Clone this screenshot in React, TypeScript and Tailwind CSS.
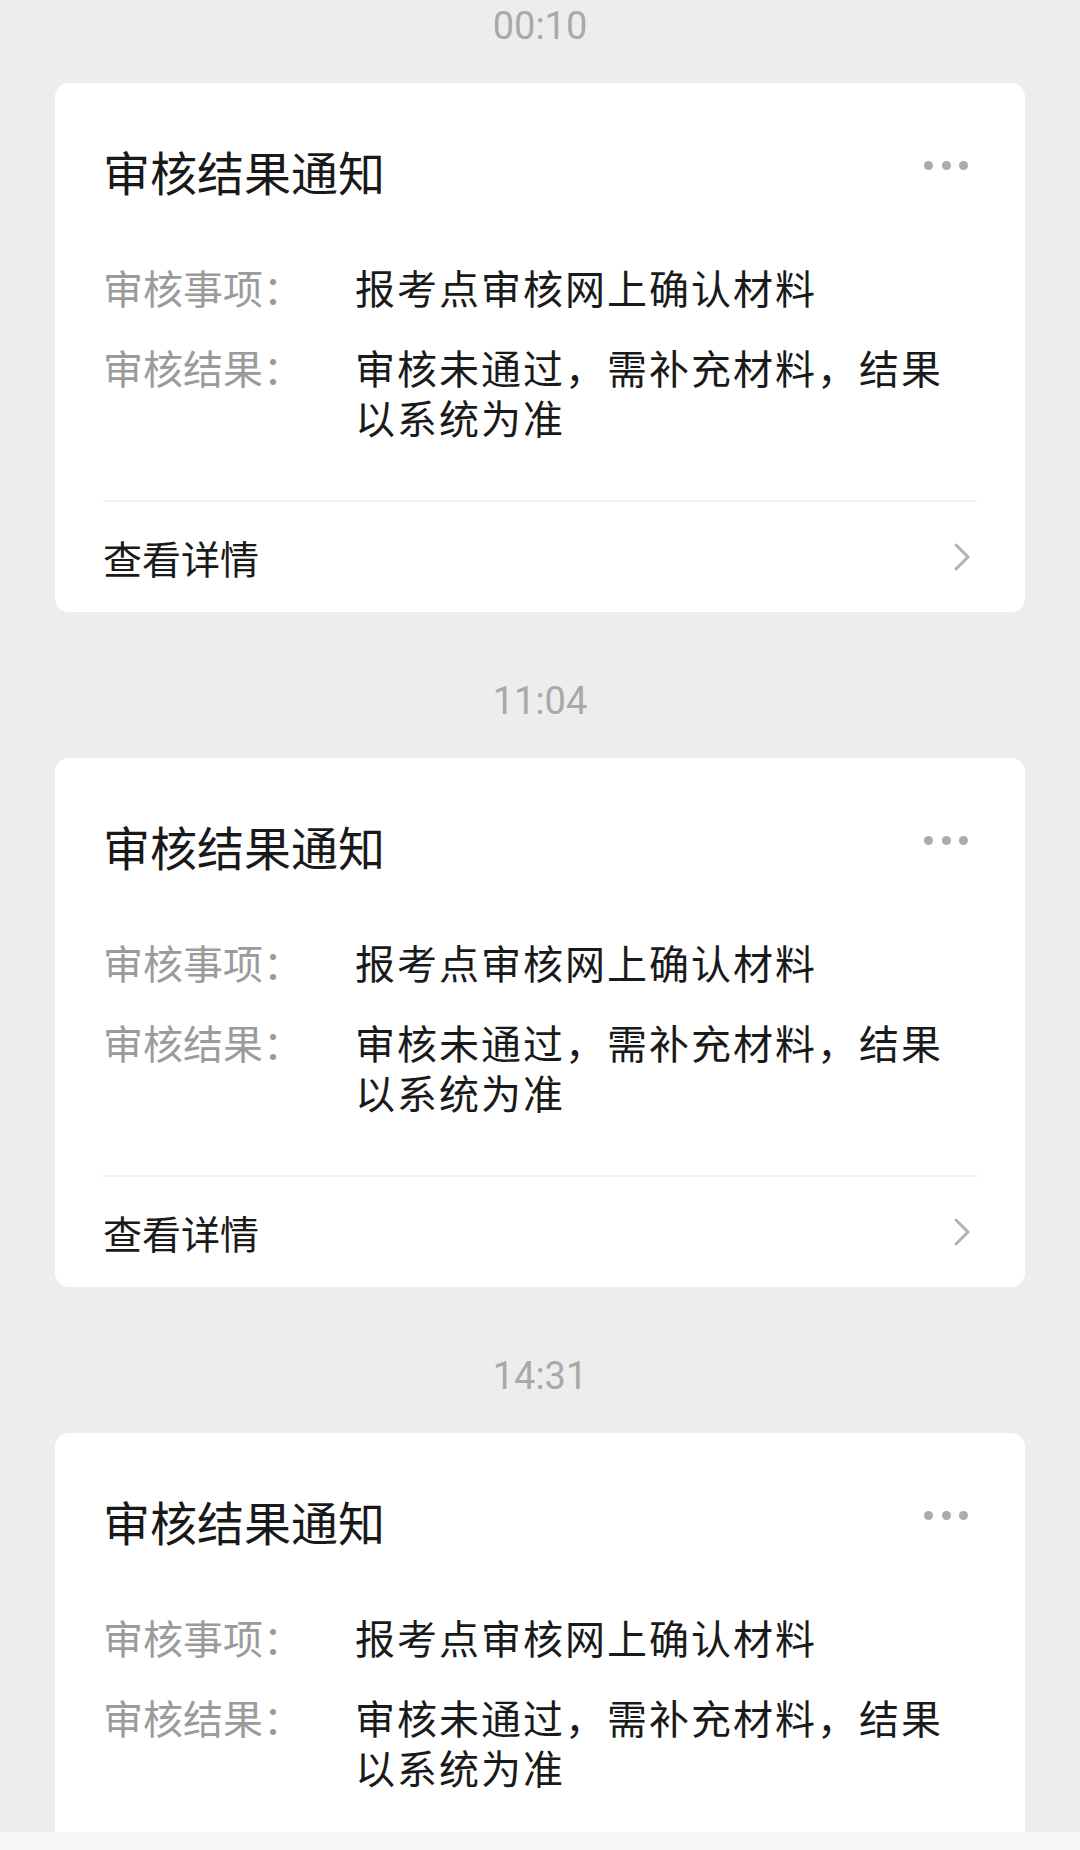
import { Fragment } from "react";

const notices = [
  { time: "00:10", item: "报考点审核网上确认材料", result: "审核未通过，需补充材料，结果以系统为准" },
  { time: "11:04", item: "报考点审核网上确认材料", result: "审核未通过，需补充材料，结果以系统为准" },
  { time: "14:31", item: "报考点审核网上确认材料", result: "审核未通过，需补充材料，结果以系统为准" },
];

const cjk = "font-['Noto_Sans_CJK_SC','Noto_Sans',sans-serif]";

const NoticeCard = ({ item, result }: { item: string; result: string }) => (
  <div className={`bg-white rounded-[14px] px-[48px] ${cjk}`}>
    <div className="flex justify-between items-start pt-[60px]">
      <h2 className="text-[47px] leading-[56px] text-[#191919] font-normal">审核结果通知</h2>
      <div className="flex gap-[8.5px] mt-[18px] mr-[9px]">
        <span className="w-[9px] h-[9px] rounded-full bg-[#ababab]" />
        <span className="w-[9px] h-[9px] rounded-full bg-[#ababab]" />
        <span className="w-[9px] h-[9px] rounded-full bg-[#ababab]" />
      </div>
    </div>

    <div className="flex flex-col gap-[30px] mt-[63px] text-[40px] leading-[50px]">
      <div className="flex">
        <span className="w-[252px] shrink-0 text-[#9b9b9b]">审核事项：</span>
        <span className="flex-1 text-[#1a1a1a] tracking-[2px]">{item}</span>
      </div>
      <div className="flex">
        <span className="w-[252px] shrink-0 text-[#9b9b9b]">审核结果：</span>
        <span className="flex-1 text-[#1a1a1a] tracking-[2px]">{result}</span>
      </div>
    </div>

    <div className="mt-[58px] h-[2px] bg-[#f2f2f2]" />

    <div className="flex items-center justify-between h-[110px]">
      <span className="text-[39px] leading-[50px] text-[#1a1a1a]">查看详情</span>
      <svg width="18" height="28" viewBox="0 0 18 28" className="mr-[6px]">
        <path d="M3 2 L15 14 L3 26" fill="none" stroke="#b3b3b3" strokeWidth="3" strokeLinecap="round" strokeLinejoin="round" />
      </svg>
    </div>
  </div>
);

export default function App() {
  return (
    <div className="w-[1080px] h-[1850px] flex flex-col bg-[#ededed] overflow-hidden">
      <div className="flex-1 overflow-hidden px-[55px] pt-[6px]">
        {notices.map((n, i) => (
          <Fragment key={i}>
            <div
              className={`text-center text-[38px] leading-[40px] text-[#a9a9a9] font-['Roboto','Liberation_Sans',sans-serif] ${
                i > 0 ? "mt-[69px]" : ""
              }`}
            >
              {n.time}
            </div>
            <div className="mt-[37px]">
              <NoticeCard item={n.item} result={n.result} />
            </div>
          </Fragment>
        ))}
      </div>
      <div className="h-[18px] bg-[#f7f7f7] shrink-0" />
    </div>
  );
}
